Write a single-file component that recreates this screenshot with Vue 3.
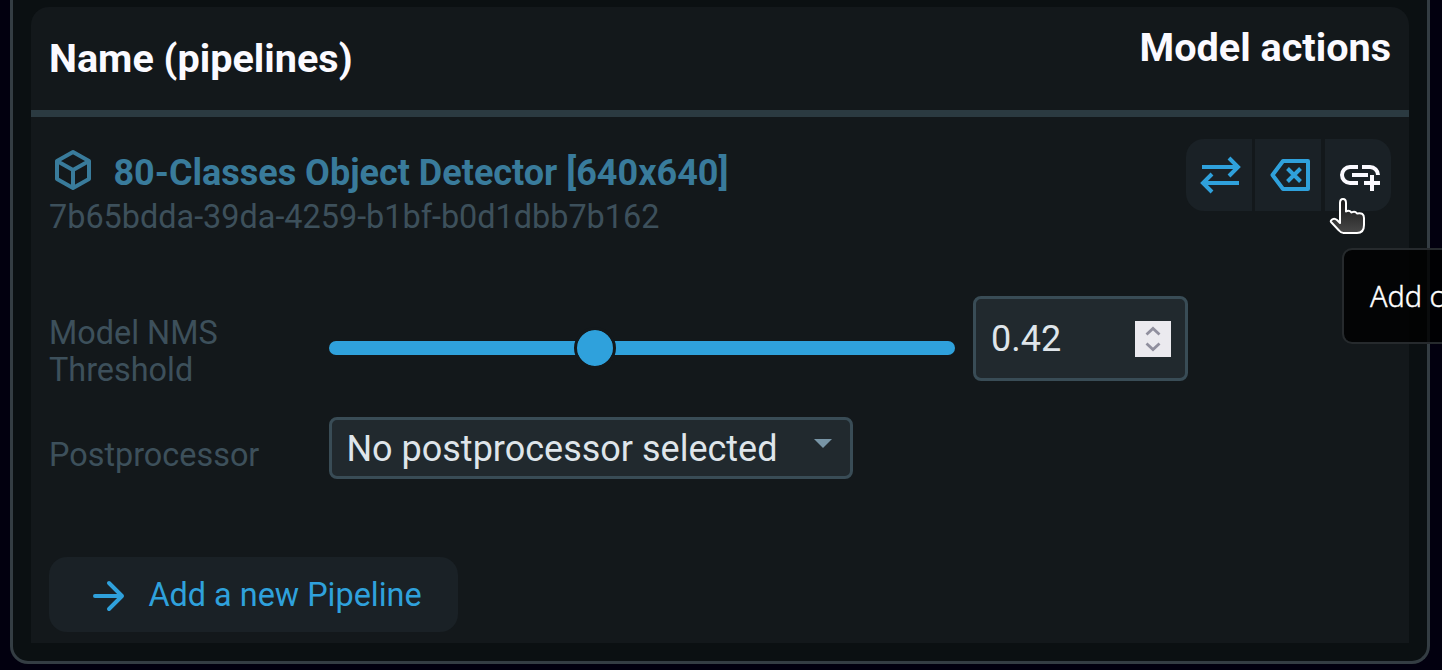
<script setup>
import { ref } from 'vue'

const model = {
  name: '80-Classes Object Detector [640x640]',
  id: '7b65bdda-39da-4259-b1bf-b0d1dbb7b162',
}
const threshold = ref('0.42')
</script>

<template>
  <main class="page">
    <section class="card">
      <div class="panel">
        <header class="head">
          <h2 class="head-name"><span>Name (pipelines)</span></h2>
          <h2 class="head-actions"><span>Model actions</span></h2>
        </header>

        <div class="body">
          <div class="model">
            <div class="model-info">
              <div class="model-title">
                <svg class="cube" viewBox="0 0 40 42" fill="none" stroke="currentColor" stroke-width="4" stroke-linejoin="round">
                  <path d="M20 3 36 12V30L20 39 4 30V12ZM4 12l16 9 16-9M20 21v18" />
                </svg>
                <span class="title-text">{{ model.name }}</span>
              </div>
              <div class="model-id"><span>{{ model.id }}</span></div>
            </div>
            <div class="actions">
              <button class="action">
                <svg viewBox="0 0 66 72" fill="none" stroke="currentColor" stroke-width="4">
                  <path d="M16 28h36M43 19l9 9-9 9M53 44H17M26 35l-9 9 9 9" />
                </svg>
              </button>
              <button class="action">
                <svg viewBox="0 0 66 72" fill="none" stroke="currentColor" stroke-width="4" stroke-linejoin="round">
                  <path d="M28 22H53V50H28L17.500 36Z" />
                  <path d="M32.500 29.500 45.500 42.500M45.500 29.500 32.500 42.500" />
                </svg>
              </button>
              <button class="action hovered">
                <svg viewBox="0 0 66 72" fill="none" stroke="currentColor" stroke-width="4">
                  <path d="M33 28H25a8 8 0 0 0 0 16h8M37 28h8a8 8 0 0 1 8 8M27 36h16M39 44h16M47 36v16" />
                </svg>
              </button>
            </div>
          </div>

          <div class="row nms">
            <label class="label">Model NMS<br />Threshold</label>
            <div class="slider"><span class="thumb"></span></div>
            <div class="number">
              <span class="value">{{ threshold }}</span>
              <svg class="spin" viewBox="0 0 36 36" fill="none" stroke="#908f9e" stroke-width="2.8">
                <path d="M11.5 13.5 18 7.5l6.500 6M11.5 22.500 18 28.500l6.500-6" />
              </svg>
            </div>
          </div>

          <div class="row post">
            <label class="label">Postprocessor</label>
            <div class="select">
              <span class="select-text">No postprocessor selected</span>
              <svg class="caret" viewBox="0 0 18 9"><path d="M0 0H18L9 9Z" fill="#7895a6" /></svg>
            </div>
          </div>

          <button class="add">
            <svg class="arrow" viewBox="0 0 34 34" fill="none" stroke="currentColor" stroke-width="4" stroke-linecap="round" stroke-linejoin="round">
              <path d="M3 17H30M17 4 30 17 17 30" />
            </svg>
            <span class="add-text">Add a new Pipeline</span>
          </button>
        </div>
      </div>
    </section>

    <div class="tooltip"><span>Add c</span></div>
    <svg class="cursor" viewBox="0 0 38 40">
      <defs>
        <linearGradient id="hand" x1="0" y1="0" x2="0" y2="1">
          <stop offset="0" stop-color="#151515" />
          <stop offset="1" stop-color="#484848" />
        </linearGradient>
      </defs>
      <path d="M12 7Q12 3 15 3T18 7V15.500Q21 13.500 23.500 16.500Q27 14.500 29 17.500Q36 16 36 22V29Q36 37 29 37H15.500Q13 37 11 34.500L3.500 26.500Q2 25 3.500 24Q6 21.500 9 24L12 27Z" fill="url(#hand)" stroke="#fff" stroke-width="2" stroke-linejoin="round" />
    </svg>
  </main>
</template>

<style>
body {
  margin: 0;
  overflow: hidden;
  background: #02000f;
}
</style>

<style scoped>
.page {
  position: relative;
  box-sizing: border-box;
  width: 1442px;
  height: 670px;
  padding: 0 12px 6px 10px;
  overflow: hidden;
  background: #02000f;
  font-family: Roboto, "Liberation Sans", sans-serif;
}
.card {
  box-sizing: border-box;
  height: 664px;
  padding: 7px 18px 18px;
  border: 3px solid #343d43;
  border-top: 0;
  border-radius: 0 0 18px 18px;
  background: #0b1012;
}
.panel {
  height: 636px;
  border-radius: 18px 18px 0 0;
  background: #13181b;
}
.head {
  box-sizing: border-box;
  display: flex;
  justify-content: space-between;
  height: 110px;
  padding: 0 18px;
  border-bottom: 7px solid #2b3a41;
}
h2 {
  margin: 0;
  font-size: 39.6px;
  line-height: 46px;
  font-weight: 700;
  color: #fbfaff;
  white-space: nowrap;
}
.head-name { padding-top: 29px; }
.head-actions { padding-top: 18px; }
.body { padding: 22px 18px 0; }
.model {
  display: flex;
  justify-content: space-between;
  height: 157px;
}
.model-title {
  display: flex;
  height: 58px;
  color: #397b9b;
}
.cube {
  width: 40px;
  height: 42px;
  margin: 10px 20.4px 0 4px;
}
.title-text {
  padding-top: 13px;
  font-size: 36px;
  line-height: 42px;
  font-weight: 700;
  white-space: nowrap;
}
.model-id {
  font-size: 32.4px;
  line-height: 40px;
  color: #3d505b;
  white-space: nowrap;
}
.actions {
  display: flex;
  gap: 3px;
  height: 72px;
  border-radius: 18px;
  overflow: hidden;
}
button {
  border: 0;
  padding: 0;
  font-family: inherit;
  color: #2fa1dc;
  background: #1a2126;
}
.action {
  width: 66px;
  height: 72px;
}
.action svg {
  display: block;
  width: 66px;
  height: 72px;
}
.hovered {
  margin-left: 1px;
  color: #fbfaff;
}
.row { display: flex; }
.label {
  width: 280px;
  font-size: 32.4px;
  line-height: 37px;
  color: #3d505b;
}
.nms { height: 121px; }
.nms .label { padding-top: 19px; }
.slider {
  display: flex;
  align-items: center;
  width: 626px;
  height: 14px;
  margin: 45px 18px 0 0;
  border-radius: 7px;
  background: #2fa1dc;
}
.thumb {
  width: 36px;
  height: 36px;
  margin-left: 245px;
  border: 3px solid #13181b;
  border-radius: 50%;
  background: #2fa1dc;
  background-clip: padding-box;
}
.number {
  box-sizing: border-box;
  display: flex;
  align-items: center;
  justify-content: space-between;
  width: 215px;
  height: 85px;
  padding: 0 14px 0 15px;
  border: 3px solid #394c56;
  border-radius: 8px;
  background: #21292e;
  font-size: 36px;
  color: #dfe5ea;
}
.spin {
  width: 36px;
  height: 36px;
  background: #ebeaef;
}
.post { height: 140px; }
.post .label { padding-top: 20px; }
.select {
  box-sizing: border-box;
  display: flex;
  justify-content: space-between;
  width: 524px;
  height: 62px;
  padding: 0 18px 0 14.4px;
  border: 3px solid #394c56;
  border-radius: 8px;
  background: #21292e;
}
.select-text {
  font-size: 36px;
  line-height: 58px;
  color: #dfe5ea;
  white-space: nowrap;
}
.caret {
  width: 18px;
  height: 9px;
  margin-top: 19px;
}
.add {
  display: flex;
  width: 409px;
  height: 75px;
  border-radius: 18px;
}
.arrow {
  width: 34px;
  height: 34px;
  margin: 22px 0 0 43px;
}
.add-text {
  padding: 18px 0 0 22.4px;
  font-size: 32.4px;
  line-height: 40px;
  white-space: nowrap;
}
.tooltip {
  position: absolute;
  box-sizing: border-box;
  left: 1342px;
  top: 248px;
  width: 180px;
  height: 96px;
  padding: 26px 26px;
  border: 2px solid #262a2d;
  border-radius: 10px;
  background: rgba(0, 0, 0, 0.8);
  background-clip: padding-box;
  font-family: "Noto Sans", sans-serif;
  font-size: 28.8px;
  font-weight: 300;
  line-height: 40px;
  color: #fff;
  -webkit-text-stroke: 0.4px #fff;
  white-space: nowrap;
}
.cursor {
  position: absolute;
  left: 1328px;
  top: 196px;
  width: 38px;
  height: 40px;
}
</style>
